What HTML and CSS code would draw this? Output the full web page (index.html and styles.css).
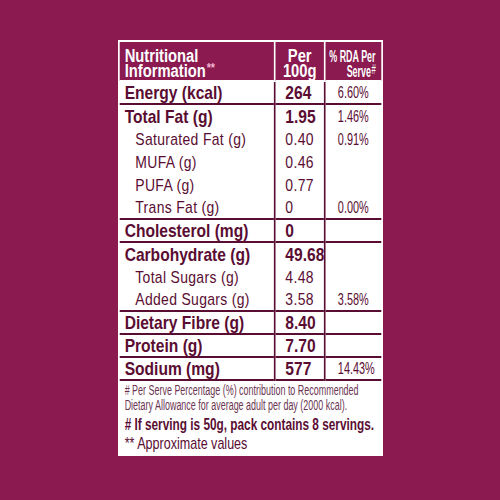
FILE: index.html
```html
<!DOCTYPE html>
<html>
<head>
<meta charset="utf-8">
<link rel="stylesheet" href="styles.css">
</head>
<body>
<div class="panel">
  <table class="nt">
    <colgroup><col class="c1"><col class="c2"><col class="c3"></colgroup>
    <thead>
      <tr>
        <th class="h1">Nutritional<br>Information<span class="ast">**</span></th>
        <th class="h2">Per<br>100g</th>
        <th class="h3">
          <div class="rda">
            <span class="rl">% RDA Per</span>
            <span class="rl">Serve<span class="hash">#</span></span>
          </div>
        </th>
      </tr>
    </thead>
    <tbody>
      <tr><td class="b">Energy (kcal)</td><td class="b">264</td><td><span class="pc">6.60%</span></td></tr>
    </tbody>
    <tbody>
      <tr><td class="b">Total Fat (g)</td><td class="b">1.95</td><td><span class="pc">1.46%</span></td></tr>
      <tr><td class="sub">Saturated Fat (g)</td><td>0.40</td><td><span class="pc">0.91%</span></td></tr>
      <tr><td class="sub">MUFA (g)</td><td>0.46</td><td></td></tr>
      <tr><td class="sub">PUFA (g)</td><td>0.77</td><td></td></tr>
      <tr><td class="sub">Trans Fat (g)</td><td>0</td><td><span class="pc">0.00%</span></td></tr>
    </tbody>
    <tbody>
      <tr><td class="b">Cholesterol (mg)</td><td class="b">0</td><td></td></tr>
    </tbody>
    <tbody>
      <tr><td class="b">Carbohydrate (g)</td><td class="b">49.68</td><td></td></tr>
      <tr><td class="sub">Total Sugars (g)</td><td>4.48</td><td></td></tr>
      <tr><td class="sub">Added Sugars (g)</td><td>3.58</td><td><span class="pc">3.58%</span></td></tr>
    </tbody>
    <tbody>
      <tr><td class="b">Dietary Fibre (g)</td><td class="b">8.40</td><td></td></tr>
    </tbody>
    <tbody>
      <tr><td class="b">Protein (g)</td><td class="b">7.70</td><td></td></tr>
    </tbody>
    <tbody>
      <tr><td class="b">Sodium (mg)</td><td class="b">577</td><td><span class="pc">14.43%</span></td></tr>
    </tbody>
  </table>
  <div class="notes">
    <p class="n1"># Per Serve Percentage (%) contribution to Recommended<br>Dietary Allowance for average adult per day (2000 kcal).</p>
    <p class="n2"># If serving is 50g, pack contains 8 servings.</p>
    <p class="n3">** Approximate values</p>
  </div>
</div>
</body>
</html>
```

FILE: styles.css
```css
html, body {
  margin: 0;
  padding: 0;
}
body {
  width: 500px;
  height: 500px;
  overflow: hidden;
  background: #8a1a4f;
  display: flex;
  justify-content: center;
  align-items: flex-start;
  font-family: "Liberation Sans", Arial, sans-serif;
  color: #5a0d32;
}
.panel {
  margin-top: 40px;
  width: 319px;
  flex: none;
  border: 2px solid #ffffff;
  background: #ffffff;
  transform: scaleX(0.82);
  transform-origin: 50% 0;
}
.nt {
  width: 100%;
  border-collapse: collapse;
  table-layout: fixed;
}
.c1 { width: 189px; }
.c2 { width: 61px; }
.c3 { width: 69px; }
th {
  background: #8a1a4f;
  color: #ffffff;
  font-weight: bold;
  font-size: 18px;
  line-height: 15px;
  height: 29px;
  padding: 7px 0 0;
  vertical-align: top;
  white-space: nowrap;
  border-left: 2px solid #ffffff;
  border-bottom: 2px solid #ffffff;
}
th.h1 {
  border-left: none;
  text-align: left;
  padding-left: 6px;
}
.ast {
  font-size: 13px;
  position: relative;
  top: -5px;
  color: #f0b3cf;
  margin-left: 1px;
}
th.h2 {
  text-align: center;
}
th.h3 {
  padding-right: 7px;
  font-size: 16px;
}
.rda {
  display: flex;
  flex-direction: column;
  align-items: flex-end;
}
.rl {
  display: block;
  height: 15px;
  transform: scaleX(0.68);
  transform-origin: 100% 50%;
}
.hash {
  font-size: 14px;
  font-weight: normal;
  position: relative;
  top: -3px;
  margin-left: 1px;
}
tbody {
  border-bottom: 2px solid #5a0d32;
}
td {
  font-size: 17px;
  letter-spacing: 0.4px;
  line-height: 20px;
  height: 23px;
  padding: 0 0 0 12px;
  vertical-align: middle;
  border-left: 2px solid #5a0d32;
  text-align: left;
  white-space: nowrap;
  overflow: hidden;
}
tbody tr:last-child td {
  height: 21px;
}
td:first-child {
  border-left: none;
  padding-left: 6px;
}
td:nth-child(3) {
  padding-left: 15px;
}
td.b {
  font-weight: bold;
  font-size: 19px;
  letter-spacing: 0;
}
td.sub {
  padding-left: 19px;
}
.pc {
  display: inline-block;
  font-size: 16px;
  letter-spacing: 0;
  transform: scaleX(0.83);
  transform-origin: 0 50%;
}
.notes {
  padding: 2px 6px 1px;
}
.notes p {
  margin: 0;
  white-space: nowrap;
  transform-origin: 0 50%;
}
.n1 {
  font-size: 14px;
  line-height: 14.5px;
  color: #6b3552;
  transform: scaleX(0.78);
}
.n2 {
  font-size: 16px;
  line-height: 18px;
  font-weight: bold;
  margin-top: 4px !important;
  transform: scaleX(0.9);
}
.n3 {
  font-size: 17px;
  line-height: 19px;
  transform: scaleX(0.9);
}
```
